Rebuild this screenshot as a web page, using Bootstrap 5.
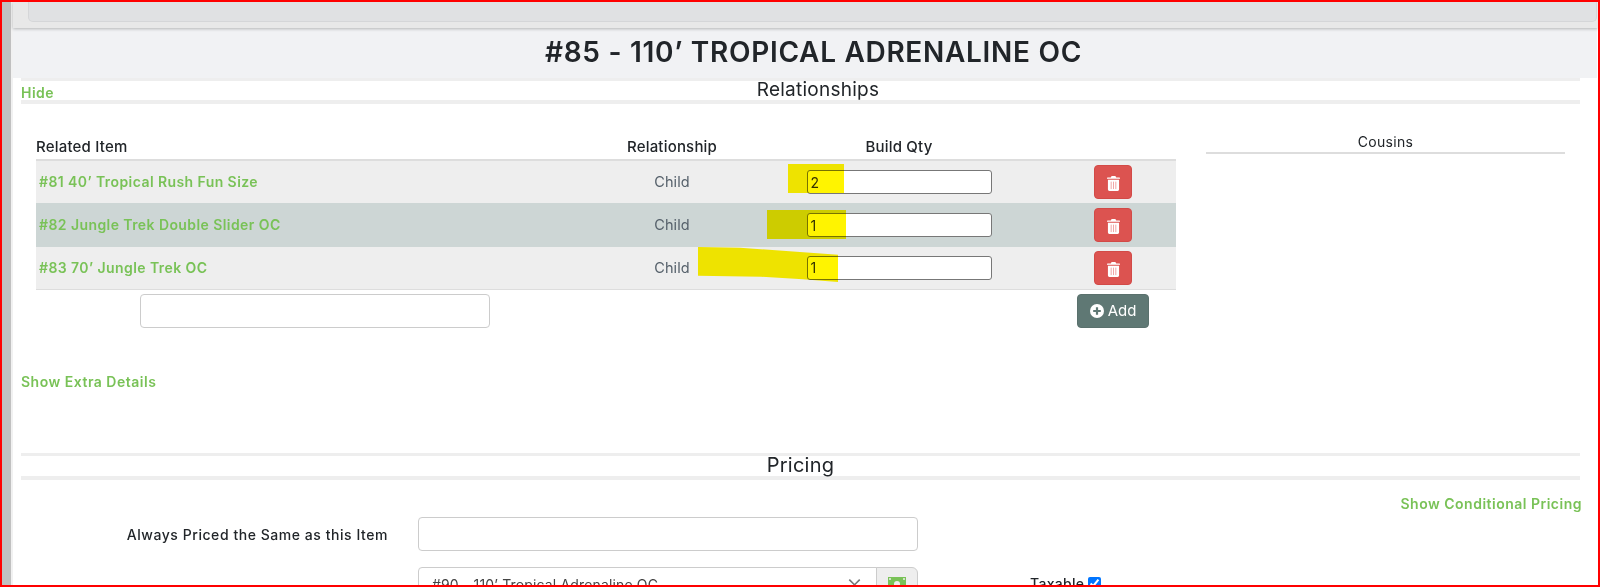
<!DOCTYPE html>
<html lang="en">
<head>
  <meta charset="UTF-8">
  <meta name="viewport" content="width=device-width, initial-scale=1.0">
  <title>#85 - 110' Tropical Adrenaline OC</title>
  <link href="https://cdn.jsdelivr.net/npm/bootstrap@5.3.0/dist/css/bootstrap.min.css" rel="stylesheet">
  <style>
    body { margin: 0; background: #fff; overflow: hidden; font-family: Inter, "Noto Sans", sans-serif; font-size: 14.5px; color: #212529; }
    .shot { position: relative; height: 587px; border: 2px solid #f00; overflow: hidden; }
    .side-strip { width: 11px; flex: none; background: #c0c0c0; border-right: 2px solid #f1f1f1; }
    .page-main { min-width: 0; }

    .top-band { height: 26px; background: #e8e8e8; padding: 0 1px 0 15px; box-shadow: 0 1px 3px rgba(0,0,0,.25); position: relative; }
    .top-card { height: 20px; background: #e0e1e3; border: 1px solid #d5d6d8; border-top: 0; border-radius: 0 0 5px 5px; }
    .title-band { height: 50px; margin: 0 1px 0 0; background: #f1f2f4; font-size: 28px; font-weight: 600; letter-spacing: .7px; text-align: center; line-height: 48px; padding-left: 17px; }

    .sect-wrap { margin: 0 18px 0 8px; }
    .sect-head { position: relative; height: 26px; border-top: 3px solid #eee; border-bottom: 4px solid #eee; text-align: center; line-height: 18px; font-size: 19px; letter-spacing: .25px; }
    .sect-head.pricing { font-size: 20px; height: 27px; line-height: 19px; }
    .sect-head.rel { padding-left: 35px; }
    .green-link { color: #79c257; font-weight: 600; text-decoration: none; font-size: 14px; letter-spacing: .5px; }
    .hide-link { position: absolute; left: 0; top: 2px; line-height: 20px; }

    .rel-area { margin-left: 15px; }
    .rel-table { width: 1140px; margin-top: 32px; table-layout: fixed; border-collapse: collapse; }
    .rel-table th { height: 24px; padding: 0; font-weight: 500; font-size: 15px; letter-spacing: .2px; border-bottom: 2px solid #ddd; }
    .rel-table td { padding: 0; height: 43px; vertical-align: middle; }
    .row-plain { background: #eee; }
    .row-alt { background: #cdd6d5; }
    .rel-table tr.row-alt td { height: 44px; }
    .rel-table tr.row-last td { height: 42px; border-bottom: 1px solid #ddd; }
    .rel-table a { padding-left: 3px; font-size: 14px; font-weight: 600; letter-spacing: .42px; }
    .rel-kind { color: #56616b; font-size: 14.5px; letter-spacing: .1px; }
    .qty-input { display: block; margin: 0 auto; width: 185px; height: 24px; border: 1px solid #777; border-radius: 3px; padding: 0 3px; font-size: 14px; background: #fff; color: #333; }
    .del-btn { width: 38px; height: 34px; padding: 0; margin-left: 4px; background: #dc5350; border: 1px solid #d24a47; border-radius: 4px; }
    .add-row td { padding-top: 1px; }
    .add-input { margin-left: 104px; width: 350px; height: 34px; border-color: #ccc; border-radius: 4px; }
    .add-btn { width: 72px; height: 34px; margin-left: 4px; padding: 0; background: #5f7874; border: 1px solid #5a716d; border-radius: 4px; color: #fff; font-size: 15px; }
    .cousin-col { width: 359px; margin-left: 30px; margin-top: 28px; text-align: center; line-height: 20px; height: 22px; border-bottom: 2px solid #ddd; font-size: 14px; letter-spacing: .3px; }
    .extra-line { margin-top: 40px; line-height: 20px; height: 81px; }

    .cond-line { line-height: 20px; margin: 14px -2px 0 0; }
    .price-row { height: 34px; margin-top: 3px; }
    .price-row + .price-row { margin-top: 16px; }
    .price-label { width: 367px; text-align: right; font-weight: 500; font-size: 14px; letter-spacing: .55px; flex: none; }
    .price-input { width: 500px; margin-left: 30px; flex: none; }
    .price-input .form-control, .plain-input { height: 34px; border-color: #ccc; border-radius: 4px; font-size: 14px; letter-spacing: .15px; padding: 6px 13px; color: #444; }
    .clear-x { position: absolute; right: 55px; top: 3px; font-size: 26px; font-weight: 300; line-height: 26px; color: #777; z-index: 5; }
    .money-addon { width: 42px; justify-content: center; background: #eee; border-color: #ccc; padding: 0; }
    .tax-box { margin-left: 112px; font-size: 14px; letter-spacing: .3px; font-weight: 500; padding-top: 6px; }
    .tax-box input { width: 13px; height: 13px; margin: 0 0 0 4px; vertical-align: -1px; }

    /* marker strokes over the qty cells */
    .marker { position: absolute; mix-blend-mode: multiply; background: #fff400; z-index: 10; }
    .mark-a { left: 786px; top: 162px; width: 56px; height: 29px; }
    .mark-b { left: 765px; top: 208px; width: 79px; height: 29px; }
    .mark-c { left: 696px; top: 245px; width: 140px; height: 35px; clip-path: polygon(0 0, 30% 2%, 100% 22%, 100% 100%, 75% 92%, 45% 85%, 0 82%); }
  </style>
</head>
<body>
<div class="shot d-flex">
  <div class="side-strip"></div>
  <div class="page-main flex-grow-1">
    <div class="top-band"><div class="top-card"></div></div>
    <h1 class="title-band">#85 - 110’ TROPICAL ADRENALINE OC</h1>

    <div class="sect-wrap">
      <!-- Relationships -->
      <div class="sect-head rel">
        <a href="#" class="green-link hide-link">Hide</a>
        Relationships
      </div>
      <div class="rel-area d-flex align-items-start">
        <table class="rel-table">
          <colgroup>
            <col style="width:556px"><col style="width:160px"><col style="width:294px"><col style="width:130px">
          </colgroup>
          <thead>
            <tr><th>Related Item</th><th class="text-center">Relationship</th><th class="text-center">Build Qty</th><th></th></tr>
          </thead>
          <tbody>
            <tr class="row-plain">
              <td><a href="#" class="green-link">#81 40’ Tropical Rush Fun Size</a></td>
              <td class="text-center rel-kind">Child</td>
              <td><input class="qty-input" type="text" value="2"></td>
              <td class="text-center"><button class="btn del-btn"><svg width="13" height="15" viewBox="0 0 14 16"><path fill="#fff" d="M5 0h4l1 1.500h3.500a.5.500 0 0 1 .5.500v1H0V2a.5.500 0 0 1 .5-.5H4zM1 4h12v10.500a1.500 1.500 0 0 1-1.500 1.500h-9A1.500 1.500 0 0 1 1 14.500z"/><path stroke="#f0a0a0" stroke-width="1" d="M4.500 6v8M7 6v8M9.500 6v8"/></svg></button></td>
            </tr>
            <tr class="row-alt">
              <td><a href="#" class="green-link">#82 Jungle Trek Double Slider OC</a></td>
              <td class="text-center rel-kind">Child</td>
              <td><input class="qty-input" type="text" value="1"></td>
              <td class="text-center"><button class="btn del-btn"><svg width="13" height="15" viewBox="0 0 14 16"><path fill="#fff" d="M5 0h4l1 1.500h3.500a.5.500 0 0 1 .5.500v1H0V2a.5.500 0 0 1 .5-.5H4zM1 4h12v10.500a1.500 1.500 0 0 1-1.500 1.500h-9A1.500 1.500 0 0 1 1 14.500z"/><path stroke="#f0a0a0" stroke-width="1" d="M4.500 6v8M7 6v8M9.500 6v8"/></svg></button></td>
            </tr>
            <tr class="row-plain row-last">
              <td><a href="#" class="green-link">#83 70’ Jungle Trek OC</a></td>
              <td class="text-center rel-kind">Child</td>
              <td><input class="qty-input" type="text" value="1"></td>
              <td class="text-center"><button class="btn del-btn"><svg width="13" height="15" viewBox="0 0 14 16"><path fill="#fff" d="M5 0h4l1 1.500h3.500a.5.500 0 0 1 .5.500v1H0V2a.5.500 0 0 1 .5-.5H4zM1 4h12v10.500a1.500 1.500 0 0 1-1.500 1.500h-9A1.500 1.500 0 0 1 1 14.500z"/><path stroke="#f0a0a0" stroke-width="1" d="M4.500 6v8M7 6v8M9.500 6v8"/></svg></button></td>
            </tr>
            <tr class="add-row">
              <td colspan="3"><input class="form-control add-input" type="text"></td>
              <td class="text-center"><button class="btn add-btn d-inline-flex align-items-center justify-content-center gap-1"><svg width="14" height="14" viewBox="0 0 14 14"><circle cx="7" cy="7" r="7" fill="#fff"/><path stroke="#5f7874" stroke-width="2.200" d="M7 3.200v7.600M3.200 7h7.600"/></svg>Add</button></td>
            </tr>
          </tbody>
        </table>
        <div class="cousin-col">Cousins</div>
      </div>
      <div class="extra-line"><a href="#" class="green-link">Show Extra Details</a></div>

      <!-- Pricing -->
      <div class="sect-head pricing">Pricing</div>
      <div class="cond-line text-end"><a href="#" class="green-link">Show Conditional Pricing</a></div>
      <div class="price-row d-flex align-items-center">
        <div class="price-label">Always Priced the Same as this Item</div>
        <div class="price-input"><input class="form-control plain-input" type="text"></div>
      </div>
      <div class="price-row d-flex align-items-start">
        <div class="price-label"></div>
        <div class="price-input input-group position-relative">
          <input class="form-control" type="text" value="#90 - 110’ Tropical Adrenaline OC">
          <span class="clear-x">×</span>
          <span class="input-group-text money-addon"><svg width="18" height="14" viewBox="0 0 18 14"><rect width="18" height="14" fill="#79c257"/><circle cx="9" cy="7" r="3" fill="#eee"/><circle cx="2" cy="2" r="1" fill="#eee"/><circle cx="16" cy="2" r="1" fill="#eee"/><circle cx="2" cy="12" r="1" fill="#eee"/><circle cx="16" cy="12" r="1" fill="#eee"/></svg></span>
        </div>
        <div class="tax-box">Taxable<input type="checkbox" checked></div>
      </div>
    </div>
  </div>

  <div class="marker mark-a"></div>
  <div class="marker mark-b"></div>
  <div class="marker mark-c"></div>
</div>
<script src="https://cdn.jsdelivr.net/npm/bootstrap@5.3.0/dist/js/bootstrap.bundle.min.js"></script>
</body>
</html>
